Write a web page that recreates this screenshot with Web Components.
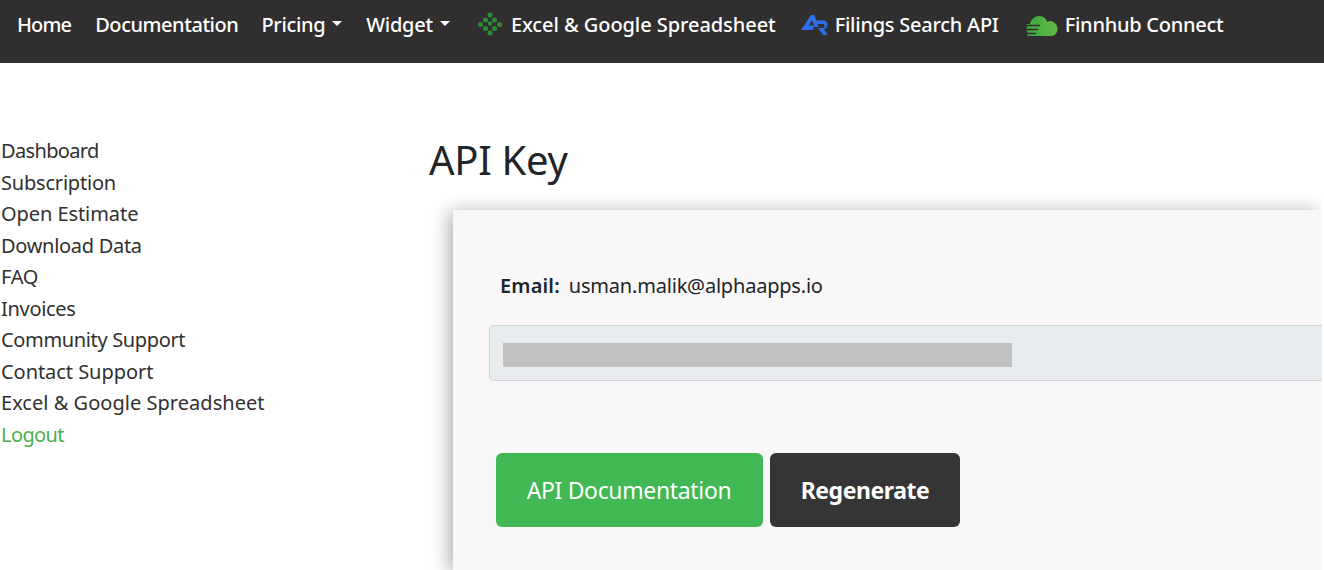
<!DOCTYPE html>
<html><head><meta charset="utf-8"><style>
html,body{margin:0;padding:0;background:#fff;overflow:hidden;height:570px}
body{font-family:"Noto Sans","Liberation Sans",sans-serif;font-size:20px;color:#212529}
</style></head><body>
<app-page></app-page>
<template id="t-nav"><style>
:host{display:flex;align-items:flex-start;height:63px;background:#302e2f;color:#fff;padding:10px 0 0 17px;box-sizing:border-box;white-space:nowrap}
</style><slot></slot></template>
<template id="t-link"><style>
:host{display:inline-flex;align-items:center;height:28px;margin-right:var(--mr,24px);font-size:20px;font-weight:500;letter-spacing:var(--ls,-.45px);color:#fff}
.c{display:none;width:0;height:0;margin-left:7px;border-top:5px solid #fff;border-left:5.500px solid transparent;border-right:5.500px solid transparent;position:relative;top:-1px}
:host([caret]) .c{display:inline-block}
::slotted(svg){flex:none}
</style><slot name="icon"></slot><span><slot></slot></span><i class="c"></i></template>
<template id="t-side"><style>
:host{display:block;width:429px;flex:none;padding:72px 0 0 1px;box-sizing:border-box;font-size:20px;line-height:31.5px;color:#323031}
</style><slot></slot></template>
<template id="t-sitem"><style>
:host{display:block;white-space:nowrap;letter-spacing:var(--ls,-.3px)}
:host([accent]){color:#4caf50}
</style><slot></slot></template>
<template id="t-main"><style>
:host{display:block;flex:none;width:893px;padding-top:69px;clip-path:inset(-40px 0 0 -40px)}
h1{margin:0 0 22px;font-weight:400;font-size:40px;line-height:56px;color:#212529;letter-spacing:-.3px}
</style><h1>API Key</h1><slot></slot></template>
<template id="t-card"><style>
:host{display:block;margin-left:24px;height:360px;background:#f9f7f8;box-shadow:-4px 2px 18px rgba(0,0,0,.32);padding:62px 0 0 36px;box-sizing:border-box}
.email{padding-left:11px;font-size:20px;line-height:28px;letter-spacing:-.2px;color:#212529}
b{font-weight:600;letter-spacing:.15px;margin-right:4px}
.input{margin-top:25px;height:56px;background:#e9ecef;border:1px solid #ced4da;border-right:0;border-radius:5px 0 0 5px;box-sizing:border-box;padding:17px 0 0 13px}
.mask{width:509px;height:24px;background:#c0c0c0}
.btns{display:flex;gap:7px;margin-top:72px;padding-left:7px}
</style><div class="email"><b>Email:</b> usman.malik@alphaapps.io</div><div class="input"><div class="mask"></div></div><div class="btns"><slot></slot></div></template>
<template id="t-btn"><style>
:host{display:flex;align-items:center;justify-content:center;height:74px;border-radius:6px;font-size:23px;letter-spacing:-.35px;color:#fff;background:#41b853;width:267px;white-space:nowrap;box-sizing:border-box;padding-right:1px}
:host([dark]){background:#363536;width:190px;font-weight:700;letter-spacing:-.45px;padding-right:0}
</style><slot></slot></template>
<template id="t-page"><style>
:host{display:block}
.row{display:flex}
</style><app-nav>
<nav-link style="--ls:-.85px">Home</nav-link><nav-link style="--ls:-.45px;--mr:23px">Documentation</nav-link><nav-link caret style="--ls:-.35px">Pricing</nav-link><nav-link caret style="--ls:-.25px">Widget</nav-link>
<nav-link style="--ls:-.07px;--mr:25px"><svg slot="icon" width="24" height="24" viewBox="0 0 24 24" style="margin-right:9px;margin-left:4px"><g fill="#2e8b35"><circle cx="12" cy="3" r="2.500"/><circle cx="7.500" cy="8" r="2.500"/><circle cx="16.500" cy="8" r="2.500"/><circle cx="2.500" cy="12.500" r="2.500"/><circle cx="21.500" cy="12.500" r="2.500"/><circle cx="12" cy="11.500" r="2.200"/><circle cx="7.500" cy="16.500" r="2.500"/><circle cx="16.500" cy="16.500" r="2.500"/><circle cx="12" cy="21" r="2.500"/></g></svg>Excel &amp; Google Spreadsheet</nav-link>
<nav-link style="--ls:-.25px;--mr:26px"><svg slot="icon" width="27" height="20" viewBox="0 0 27 20" style="margin-right:7px;margin-top:2px"><path d="M0 15 10 0h3.500l4 12h-4L11 5 8 10.500h5L12 15H4z" fill="#2f6fe8"/><path d="M13 5.500h9q4.500 0 4.500 4.500 0 3-3.500 4l3.500 6h-4.500l-5-7h5q1.500 0 1.500-2.500 0-1.500-1.500-1.500h-8z" fill="#2f6fe8"/></svg>Filings Search API</nav-link>
<nav-link style="--ls:-.27px"><svg slot="icon" width="33" height="20" viewBox="0 0 33 20" style="margin-right:7px;margin-top:3px"><defs><linearGradient id="g" x1="0" x2="1"><stop offset="0" stop-color="#3aa83f"/><stop offset="1" stop-color="#63b846"/></linearGradient></defs><path d="M5 8C6 3 10 0 14 0c4 0 7 2 8.500 6 2-2 6-1 7 1 2 1 3 3 3 6 0 4-3 7-6 7H2l1-3-2-3 1-3-1-3z" fill="url(#g)"/><path d="M0 9.500h15M0 13.500h13M0 17.500h11" stroke="#302e2f" stroke-width="1.300"/></svg>Finnhub Connect</nav-link>
</app-nav><div class="row"><side-nav>
<side-item style="--ls:-.65px">Dashboard</side-item><side-item style="--ls:-.2px">Subscription</side-item><side-item style="--ls:-.07px">Open Estimate</side-item><side-item>Download Data</side-item><side-item>FAQ</side-item><side-item>Invoices</side-item><side-item style="--ls:-.35px">Community Support</side-item><side-item style="--ls:-.05px">Contact Support</side-item><side-item style="--ls:.03px">Excel &amp; Google Spreadsheet</side-item><side-item accent style="--ls:-.6px">Logout</side-item>
</side-nav><main-area><key-card><app-btn>API Documentation</app-btn><app-btn dark>Regenerate</app-btn></key-card></main-area></div></template>
<script>
const def=(n,t)=>customElements.define(n,class extends HTMLElement{constructor(){super();this.attachShadow({mode:"open"}).append(document.getElementById(t).content.cloneNode(true))}});
[["app-nav","t-nav"],["nav-link","t-link"],["side-nav","t-side"],["side-item","t-sitem"],["main-area","t-main"],["key-card","t-card"],["app-btn","t-btn"],["app-page","t-page"]].forEach(a=>def(...a));
</script></body></html>
